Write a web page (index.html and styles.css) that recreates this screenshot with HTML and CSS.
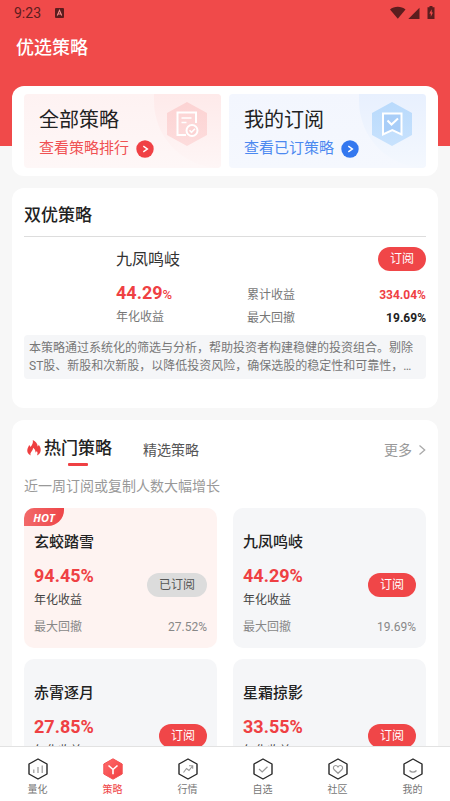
FILE: index.html
```html
<!DOCTYPE html>
<html lang="zh-CN">
<head>
<meta charset="utf-8">
<meta name="viewport" content="width=device-width, initial-scale=1">
<title>优选策略</title>
<link rel="stylesheet" href="styles.css">
</head>
<body>
<svg class="defs" aria-hidden="true">
  <defs>
    <linearGradient id="pinkHex" x1="0" y1="0" x2="0" y2="1"><stop offset="0" stop-color="#fcd3d3"/><stop offset="1" stop-color="#fddcdc"/></linearGradient>
    <linearGradient id="blueHex" x1="0" y1="0" x2="0" y2="1"><stop offset="0" stop-color="#b9dafc"/><stop offset="1" stop-color="#c8e2fd"/></linearGradient>
    <linearGradient id="redHex" x1="0" y1="0" x2="1" y2="1"><stop offset="0" stop-color="#ff6b6b"/><stop offset="1" stop-color="#f03e40"/></linearGradient>
    <symbol id="hex" viewBox="0 0 20 22"><path d="M10 1 19 6v10l-9 5-9-5V6z" fill="none" stroke="#292929" stroke-width="1.4" stroke-linejoin="round"/></symbol>
  </defs>
</svg>
<div class="app">
  <main class="content">
    <header class="hero">
      <div class="status">
        <span>9:23</span>
        <svg class="status-app" width="9" height="10" viewBox="0 0 9 10"><rect width="9" height="10" rx="1" fill="#5c1d1e"/><path d="M2.300 7.500 4.500 2.300l2.200 5.200M3.200 6h2.600" fill="none" stroke="#f58a8a" stroke-width="1.100"/></svg>
        <svg class="status-icons" width="46" height="14" viewBox="0 0 46 14" fill="#5c1d1e"><path d="M0 3.500C4-.2 11.500-.2 15.500 3.500L7.800 12.700z"/><path d="M29.500 1.800V13H18.300z"/><path d="M37.500 1.300h2V0h3v1.300h2V13h-7z"/><path d="M41.700 3.200 39.300 7.500h1.500v3.300L43 6.400h-1.300z" fill="#f04a4a"/></svg>
      </div>
      <h1>优选策略</h1>
    </header>

    <nav class="panel banners" aria-label="策略入口">
      <a class="banner banner-red" href="#all">
        <span class="banner-title">全部策略</span>
        <span class="banner-link">查看策略排行
          <svg width="18" height="18" viewBox="0 0 18 18"><circle cx="9" cy="9" r="8.700" fill="#f04145"/><path d="m7.300 6.200 4 2.800-4 2.800" fill="none" stroke="#fff" stroke-width="1.500"/></svg>
        </span>
        <span class="banner-art">
          <svg width="40" height="44" viewBox="0 0 40 44"><path d="M20 0 40 11v22L20 44 0 33V11z" fill="url(#pinkHex)"/><g fill="none" stroke="#fff" stroke-width="2"><path d="M19 33h-8.500V10.500H29V21"/><path d="M14.500 16h10M14.500 20.500h5" stroke-width="1.700"/></g><circle cx="25" cy="28.500" r="5.500" fill="#fcd3d3" stroke="#fff" stroke-width="2"/><path d="m22.500 28.300 2 2 3.500-3.600" fill="none" stroke="#fff" stroke-width="1.600"/></svg>
        </span>
      </a>
      <a class="banner banner-blue" href="#mine">
        <span class="banner-title">我的订阅</span>
        <span class="banner-link">查看已订策略
          <svg width="18" height="18" viewBox="0 0 18 18"><circle cx="9" cy="9" r="8.700" fill="#3478ef"/><path d="m7.300 6.200 4 2.800-4 2.800" fill="none" stroke="#fff" stroke-width="1.500"/></svg>
        </span>
        <span class="banner-art">
          <svg width="40" height="44" viewBox="0 0 40 44"><path d="M20 0 40 11v22L20 44 0 33V11z" fill="url(#blueHex)"/><path d="M11 11.500h18.500v21L20.300 28 11 32.500z" fill="#a9cef8" stroke="#fff" stroke-width="2"/><path d="m15.500 18.500 4 4 6.500-6" fill="none" stroke="#fff" stroke-width="2"/></svg>
        </span>
      </a>
    </nav>

    <section class="panel featured">
      <h2>双优策略</h2>
      <div class="featured-body">
        <div class="featured-main">
          <h3>九凤鸣岐</h3>
          <p class="rate">44.29<small>%</small></p>
          <p class="label">年化收益</p>
        </div>
        <div class="featured-side">
          <button class="pill" type="button">订阅</button>
          <dl>
            <div><dt>累计收益</dt><dd class="up">334.04%</dd></div>
            <div><dt>最大回撤</dt><dd>19.69%</dd></div>
          </dl>
        </div>
      </div>
      <p class="summary">本策略通过系统化的筛选与分析，帮助投资者构建稳健的投资组合。剔除ST股、新股和次新股，以降低投资风险，确保选股的稳定性和可靠性，…</p>
    </section>

    <section class="panel hot">
      <div class="tabs">
        <button class="tab tab-active" type="button">
          <svg width="16" height="18" viewBox="0 0 16 18"><path d="M4.800 16.500C1.800 15.200.8 12.700 1.400 10.200c.4-1.700 1.400-2.500 1.700-4.100.8.500 1.200 1.200 1.300 2C6.300 6 7.300 3.600 6.800 1c3 1.300 4.800 3.800 4.900 6.500.6-.4.900-1 1-1.700 1.500 2 2.300 4 1.900 6.200-.3 2.100-1.700 3.700-3.700 4.500.9-1.600.8-3.100-.1-4.400-.3.800-.7 1.200-1.300 1.500.1-2.100-.8-3.800-2.500-4.800.1 1.800-.7 2.800-1.600 3.900-1 1.200-1.300 2.400-.6 3.800z" fill="#ee3f40"/></svg>热门策略</button>
        <button class="tab" type="button">精选策略</button>
        <a class="more" href="#more">更多
          <svg width="8" height="12" viewBox="0 0 8 12"><path d="m1.500 1.500 5.200 4.500-5.200 4.500" fill="none" stroke="#aaa" stroke-width="1.300"/></svg></a>
      </div>
      <p class="note">近一周订阅或复制人数大幅增长</p>
      <div class="grid">
        <article class="card card-hot">
          <span class="badge">HOT</span>
          <h3>玄蛟踏雪</h3>
          <div class="card-row"><div><p class="rate">94.45%</p><p class="label">年化收益</p></div><button class="pill pill-done" type="button">已订阅</button></div>
          <p class="drawdown"><span>最大回撤</span><span>27.52%</span></p>
        </article>
        <article class="card">
          <h3>九凤鸣岐</h3>
          <div class="card-row"><div><p class="rate">44.29%</p><p class="label">年化收益</p></div><button class="pill" type="button">订阅</button></div>
          <p class="drawdown"><span>最大回撤</span><span>19.69%</span></p>
        </article>
        <article class="card">
          <h3>赤霄逐月</h3>
          <div class="card-row"><div><p class="rate">27.85%</p><p class="label">年化收益</p></div><button class="pill" type="button">订阅</button></div>
        </article>
        <article class="card">
          <h3>星霜掠影</h3>
          <div class="card-row"><div><p class="rate">33.55%</p><p class="label">年化收益</p></div><button class="pill" type="button">订阅</button></div>
        </article>
      </div>
    </section>
  </main>

  <nav class="tabbar" aria-label="主导航">
    <a href="#quant"><svg width="20" height="22" viewBox="0 0 20 22"><use href="#hex"/><path d="M5.800 11.500v3.500M10 9v6M14.200 7.500V15" stroke="#999" stroke-width="1.200"/></svg>量化</a>
    <a class="current" href="#strategy"><svg width="20" height="22" viewBox="0 0 20 22"><path d="M10 .8 19.200 6v10L10 21.200.8 16V6z" fill="url(#redHex)" stroke="#f45354" stroke-linejoin="round"/><path d="m5.500 7.500 4.500 4 4.500-4M10 11.500v4.800" fill="none" stroke="#fff" stroke-width="1.600"/></svg>策略</a>
    <a href="#market"><svg width="20" height="22" viewBox="0 0 20 22"><use href="#hex"/><path d="m5.500 14.500 3-4 2.500 2 3.500-4.500M11 7.800h3.700v3" fill="none" stroke="#999" stroke-width="1.100"/></svg>行情</a>
    <a href="#watch"><svg width="20" height="22" viewBox="0 0 20 22"><use href="#hex"/><path d="m6 11 3.200 3 5.300-5.200" fill="none" stroke="#999" stroke-width="1.200"/></svg>自选</a>
    <a href="#community"><svg width="20" height="22" viewBox="0 0 20 22"><use href="#hex"/><path d="M10 15.300 6 11.500C4.500 9.500 6 7.500 7.700 7.500c1 0 1.800.6 2.300 1.400.5-.8 1.300-1.400 2.300-1.400 1.700 0 3.200 2 1.700 4z" fill="none" stroke="#999" stroke-width="1.200"/></svg>社区</a>
    <a href="#me"><svg width="20" height="22" viewBox="0 0 20 22"><use href="#hex"/><path d="M6.500 12.500c2 2.200 5 2.200 7 0" fill="none" stroke="#999" stroke-width="1.200"/></svg>我的</a>
  </nav>
</div>
</body>
</html>
```

FILE: styles.css
```css
* { box-sizing: border-box; }
body, h1, h2, h3, p, dl, dd { margin: 0; }
body {
  font-family: Roboto, "Noto Sans CJK SC", sans-serif;
  font-size: 12px;
  line-height: 18px;
  color: #222;
  background: #f7f7f7;
}
a { color: inherit; text-decoration: none; }
button { font: inherit; color: inherit; border: 0; padding: 0; background: none; cursor: pointer; }
svg { display: block; flex: none; }
.defs { position: absolute; width: 0; height: 0; }

.app { height: 100vh; display: flex; flex-direction: column; }
.content { flex: 1; min-height: 0; overflow-y: auto; scrollbar-width: none; }

.hero { display: grid; gap: 14px; background: #f04a4a; padding: 5px 14px 85px; }
.status { display: flex; align-items: center; color: #5c1d1e; font-size: 14px; line-height: 16px; }
.status-app { margin-left: 14px; }
.status-icons { margin-left: auto; }
h1 { padding-left: 2px; color: #fff; font-size: 18px; line-height: 26px; font-weight: 500; }

.panel { background: #fff; border-radius: 12px; margin: 0 12px 12px; padding: 0 12px; }

.banners { position: relative; margin-top: -60px; padding: 8px 12px; display: grid; grid-template-columns: 1fr 1fr; gap: 8px; }
.banner { position: relative; overflow: hidden; border-radius: 4px; padding: 12px 15px 9px; display: grid; gap: 4px; }
.banner-title { font-size: 20px; line-height: 28px; }
.banner-link { display: flex; align-items: center; gap: 7px; font-size: 15px; line-height: 21px; }
.banner-art { position: absolute; top: 0; right: 0; padding: 8px 14px 22px 13px; border-bottom-left-radius: 68px; }
.banner-red { background: linear-gradient(#fef2f2, #fef7f7); }
.banner-red .banner-link { color: #f05153; }
.banner-red .banner-art { background: linear-gradient(#feeaea, #fef6f6); }
.banner-blue { background: linear-gradient(#f3f6fe, #f5f8fe); }
.banner-blue .banner-link { color: #4c89f0; }
.banner-blue .banner-art { background: linear-gradient(#e8f0fe, #f4f8fe); }

.featured { padding-top: 14px; padding-bottom: 29px; }
h2 { font-size: 17px; line-height: 26px; font-weight: 500; padding-bottom: 8px; border-bottom: 1px solid #ddd; }
.featured-body { display: grid; grid-template-columns: 131px 1fr; margin-left: 92px; padding: 10px 0 8px; }
.featured-main h3 { font-size: 16px; line-height: 26px; font-weight: 400; color: #333; }
.featured-main .rate { margin-top: 8px; }
.featured-main .label { margin-top: 1px; color: #777; }
.rate { color: #ef4043; font-size: 18px; line-height: 24px; font-weight: 700; }
.rate small { font-size: 13px; font-weight: 500; }
.pill { min-width: 48px; height: 24px; padding: 0 12px; border-radius: 12px; background: #f04648; color: #fff; font-size: 12px; }
.pill-done { background: #dcdcdc; color: #555; }
.featured-side { display: flex; flex-direction: column; align-items: flex-end; gap: 15px; }
.featured-side dl { width: 100%; display: grid; gap: 5px; }
.featured-side dl div { display: flex; justify-content: space-between; }
dt { color: #777; }
dd { font-weight: 700; }
.up { color: #ef4043; }
.summary { background: #f5f6f8; border-radius: 4px; padding: 4px 5px; color: #777; }

.hot { padding-top: 14px; padding-bottom: 12px; }
.tabs { display: flex; align-items: center; }
.tab { color: #555; font-size: 14px; line-height: 32px; }
.tab-active { position: relative; display: flex; align-items: center; gap: 2px; padding-left: 2px; margin-right: 31px; color: #222; font-size: 17px; font-weight: 500; line-height: 28px; padding-bottom: 4px; }
.tab-active::after { content: ""; position: absolute; bottom: 0; left: 50%; width: 20px; height: 3px; border-radius: 1px; background: #ef4043; }
.more { margin-left: auto; display: flex; align-items: center; gap: 6px; font-size: 14px; color: #999; }
.note { margin: 10px 0 12px; font-size: 14px; line-height: 20px; color: #999; }
.grid { display: grid; grid-template-columns: 1fr 1fr; gap: 11px 16px; }
.card { position: relative; overflow: hidden; border-radius: 10px; background: #f5f6f8; padding: 23px 10px 12px; }
.card-hot { background: #fef3f1; }
.card h3 { font-size: 15px; line-height: 22px; font-weight: 500; }
.card-row { display: flex; align-items: flex-start; justify-content: space-between; margin-top: 11px; }
.card-row .pill { margin-top: 9px; }
.card .label { color: #444; line-height: 24px; }
.card .drawdown { display: flex; justify-content: space-between; margin-top: 6px; color: #888; }
.badge { position: absolute; top: 0; left: 0; width: 40px; height: 18px; border-radius: 0 0 16px 0; background: linear-gradient(90deg, #f26a6a, #ee4548); color: #fff; font: italic 700 11px/19px "Open Sans", sans-serif; text-align: center; }

.tabbar { display: grid; grid-template-columns: repeat(6, 1fr); background: #fff; border-top: 1px solid #e2e2e2; padding: 11px 0 4px; }
.tabbar a { display: grid; justify-items: center; gap: 3px; font-size: 10px; line-height: 14px; color: #777; }
.tabbar .current { color: #f04648; }
```
